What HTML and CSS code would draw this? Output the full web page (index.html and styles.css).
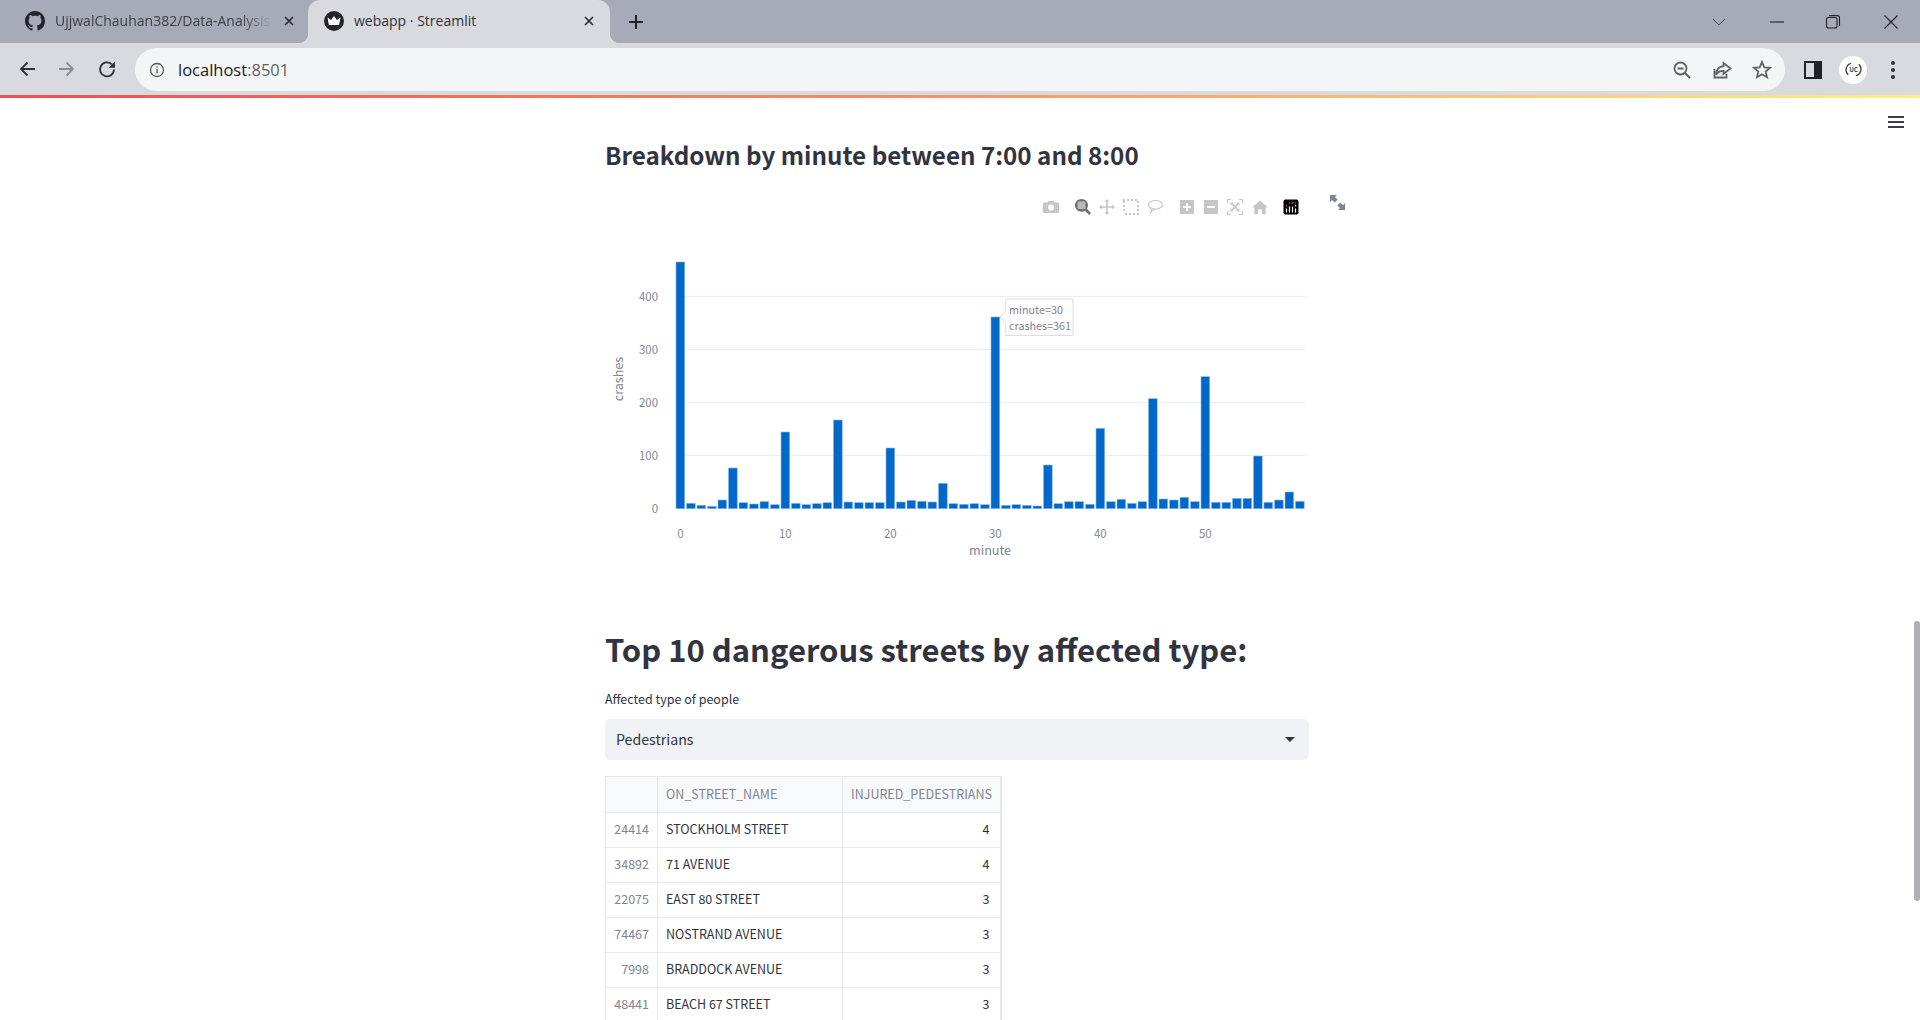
FILE: index.html
```html
<!DOCTYPE html>
<html lang="en">
<head>
<meta charset="utf-8">
<title>webapp · Streamlit</title>
<link rel="stylesheet" href="styles.css">
</head>
<body>
<header class="chrome">
  <div class="tabstrip">
    <div class="tab">
      <svg class="favicon" viewBox="0 0 16 16"><path class="ink" d="M8 0C3.58 0 0 3.58 0 8c0 3.54 2.29 6.53 5.47 7.59.4.07.55-.17.55-.38 0-.19-.01-.82-.01-1.49-2.01.37-2.53-.49-2.69-.94-.09-.23-.48-.94-.82-1.13-.28-.15-.68-.52-.01-.53.63-.01 1.08.58 1.23.82.72 1.21 1.87.87 2.33.66.07-.52.28-.87.51-1.07-1.78-.2-3.64-.89-3.64-3.95 0-.87.31-1.59.82-2.15-.08-.2-.36-1.02.08-2.12 0 0 .67-.21 2.2.82.64-.18 1.32-.27 2-.27.68 0 1.36.09 2 .27 1.53-1.04 2.2-.82 2.2-.82.44 1.1.16 1.92.08 2.12.51.56.82 1.27.82 2.15 0 3.07-1.87 3.75-3.65 3.95.29.25.54.73.54 1.48 0 1.07-.01 1.93-.01 2.2 0 .21.15.46.55.38A8.013 8.013 0 0016 8c0-4.42-3.58-8-8-8z"/></svg>
      <span class="tab-title faded">UjjwalChauhan382/Data-Analysis</span>
      <svg class="tab-close" viewBox="0 0 12 12"><path d="M2 2l8 8M10 2l-8 8"/></svg>
    </div>
    <div class="tab active">
      <svg class="favicon" viewBox="0 0 20 20"><circle class="ink" cx="10" cy="10" r="10"/><path class="crown" d="M3.500 6.500l3.600 2.600L10 5l2.900 4.100 3.600-2.600-1.400 7.500H4.900z"/></svg>
      <span class="tab-title">webapp · Streamlit</span>
      <svg class="tab-close" viewBox="0 0 12 12"><path d="M2 2l8 8M10 2l-8 8"/></svg>
    </div>
    <svg class="new-tab" viewBox="0 0 16 16"><path d="M8 1v14M1 8h14"/></svg>
    <div class="window-controls">
      <svg class="win chevron" viewBox="0 0 14 8"><path d="M1 1l6 6 6-6"/></svg>
      <svg class="win" viewBox="0 0 14 14"><path d="M0 7h14"/></svg>
      <svg class="win restore" viewBox="0 0 14 14"><rect x=".5" y="2.500" width="10.500" height="10.500" rx="2"/><path d="M3 .6h8.500a2 2 0 0 1 2 2V11"/></svg>
      <svg class="win" viewBox="0 0 14 14"><path d="M.5.5l13 13M13.500.5l-13 13"/></svg>
    </div>
  </div>
  <div class="toolbar">
    <svg class="nav" viewBox="0 0 20 20"><path d="M18 10H4M10.500 3.500L4 10l6.500 6.500"/></svg>
    <svg class="nav off" viewBox="0 0 20 20"><path d="M2 10h14M9.500 3.500L16 10l-6.500 6.500"/></svg>
    <svg class="nav" viewBox="0 0 20 20"><path d="M17 10.500a7 7 0 1 1-2.200-5.200"/><path class="solid" d="M18 2.500v6.300h-6.300z"/></svg>
    <div class="omnibox">
      <svg class="info" viewBox="0 0 16 16"><circle cx="8" cy="8" r="6.500"/><path d="M8 7v4.500M8 4.300v1.500"/></svg>
      <span class="url">localhost<span class="port">:8501</span></span>
      <div class="omni-actions">
        <svg class="omni" viewBox="0 0 20 20"><circle cx="8.500" cy="8.500" r="6"/><path d="M5.500 8.500h6M13 13l5 5"/></svg>
        <svg class="omni" viewBox="0 0 20 20"><path d="M2.500 9v8.500h12V14"/><path d="M11.500 3l7 5.500-7 5.500v-3.200c-3.500 0-6 1-7.500 4 .4-5 3-8.200 7.500-8.600z"/></svg>
        <svg class="omni" viewBox="0 0 20 20"><path d="M10 2l2.300 5.300 5.700.5-4.300 3.800 1.300 5.600-5-3-5 3 1.300-5.600L2 7.800l5.700-.5z"/></svg>
      </div>
    </div>
    <div class="side-panel"><span></span></div>
    <div class="avatar"><svg viewBox="0 0 20 20"><path d="M7.500 3.500a7 7 0 0 0-3 12M12.500 16.500a7 7 0 0 0 3-12"/><text x="10" y="12.500">UC</text></svg></div>
    <div class="kebab"><i></i><i></i><i></i></div>
  </div>
  <div class="progress"></div>
</header>

<main class="app">
  <button class="hamburger" aria-label="menu"><i></i><i></i><i></i></button>
  <div class="scrollthumb"></div>
  <section class="block">
    <h3>Breakdown by minute between 7:00 and 8:00</h3>
    <div class="chart">
      <div class="modebar">
        <svg class="mb mb-first" viewBox="0 0 16 16"><path fill-rule="evenodd" d="M1 3.500h3.500L5.500 2h5l1 1.500H15a1 1 0 0 1 1 1V13a1 1 0 0 1-1 1H1a1 1 0 0 1-1-1V4.500a1 1 0 0 1 1-1zM8 5.500a3 3 0 1 0 0 6 3 3 0 0 0 0-6z"/></svg>
        <svg class="mb mb-gap16 dark" viewBox="0 0 16 16"><path fill-rule="evenodd" d="M6.500 0C10 0 13 2.800 13 6.300c0 1.300-.4 2.500-1.100 3.500L16 14l-1.800 2-4.300-4.200c-1 .6-2.200 1-3.400 1C3 12.800 0 9.900 0 6.300 0 2.800 3 0 6.500 0zM3.800 2.800c-.6 0-1 .4-1 1v5.200c0 .6.400 1 1 1h5.400c.6 0 1-.4 1-1V3.800c0-.6-.4-1-1-1z"/><rect class="lens" x="2.800" y="2.800" width="7.400" height="7.200" rx="1"/></svg>
        <svg class="mb" viewBox="0 0 16 16"><path d="M8 0l2.500 2.800H8.800v4.400h4.400V5.500L16 8l-2.800 2.500V8.800H8.800v4.400h1.700L8 16l-2.500-2.800h1.700V8.800H2.800v1.700L0 8l2.800-2.500v1.700h4.400V2.800H5.500z"/></svg>
        <svg class="mb" viewBox="0 0 16 16"><path d="M0 0h2v2H0zM4 0h2v2H4zM8 0h2v2H8zM12 0h2v2h-2zM14 2h2v2h-2zM14 6h2v2h-2zM14 10h2v2h-2zM14 14h2v2h-2zM10 14h2v2h-2zM6 14h2v2H6zM2 14h2v2H2zM0 10h2v2H0zM0 6h2v2H0zM0 2h2v2H0z"/></svg>
        <svg class="mb mb-line" viewBox="0 0 16 16"><path d="M8.500 1.500c3.800 0 6.800 1.700 6.800 4.200s-3 4.400-6.800 4.400c-3.800 0-7-1.900-7-4.400s3.200-4.200 7-4.200zM4 9c-.6 1.700.2 2.700 1.500 2.700S7 11 6.300 10.100M4.800 11.500c-.2 1.300-.8 2.200-1.800 3"/></svg>
        <svg class="mb mb-gap17 sq" viewBox="0 0 14 14"><path fill-rule="evenodd" d="M0 0h14v14H0zM6 3v3H3v2h3v3h2V8h3V6H8V3z"/></svg>
        <svg class="mb sq mb-gap10" viewBox="0 0 14 14"><path fill-rule="evenodd" d="M0 0h14v14H0zM3 6v2h8V6z"/></svg>
        <svg class="mb mb-gap9" viewBox="0 0 16 16"><path d="M0 0h4v1H1v3H0zM12 0h4v4h-1V1h-3zM0 12h1v3h3v1H0zM15 12h1v4h-4v-1h3z"/><path d="M3.500 3.500h3L5.600 4.400l2.400 2.400 2.400-2.400-.9-.9h3v3l-.9-.9L9.200 8l2.400 2.400.9-.9v3h-3l.9-.9L8 9.200l-2.400 2.400.9.9h-3v-3l.9.9L6.800 8 4.400 5.600l-.9.9z"/></svg>
        <svg class="mb mb-gap9" viewBox="0 0 16 16"><path d="M8 1.500l8 7h-2.300V15H10v-4.500H6V15H2.300V8.500H0z"/></svg>
        <svg class="logo" viewBox="0 0 16 16"><rect width="16" height="16" rx="2.500"/><path d="M3.500 9.500v4M6.500 7.500v6M9.500 7.500v6M12.500 9.500v4"/><circle class="d1" cx="3.500" cy="6.800" r=".8"/><circle class="d1" cx="6.500" cy="4" r=".8"/><circle class="d3" cx="9.500" cy="4" r=".8"/><circle class="d1" cx="12.500" cy="4" r=".8"/><circle class="d2" cx="12.500" cy="6.800" r=".8"/></svg>
      </div>
      <svg class="fullscreen" viewBox="0 0 15 15"><path d="M0 0h7L5 2l2.600 2.600-3 3L2 5 0 7zM15 15H8l2-2-2.600-2.600 3-3L13 10l2-2z"/></svg>
      <svg class="plot" viewBox="605 180 704 400">
        <g class="grid">
          <path d="M684 296.300H1305M684 349.300H1305M684 402.300H1305M684 455.300H1305"/>
        </g>
        <g class="bars">
          <rect x="676" y="262" height="246.700"/>
          <rect x="686.500" y="503.300" height="5.400"/>
          <rect x="697" y="505.300" height="3.400"/>
          <rect x="707.500" y="506.300" height="2.400"/>
          <rect x="718" y="500" height="8.700"/>
          <rect x="728.500" y="468" height="40.700"/>
          <rect x="739" y="502.700" height="6"/>
          <rect x="749.500" y="504" height="4.700"/>
          <rect x="760" y="501.700" height="7"/>
          <rect x="770.500" y="504.700" height="4"/>
          <rect x="781" y="432" height="76.700"/>
          <rect x="791.500" y="503.300" height="5.400"/>
          <rect x="802" y="504.700" height="4"/>
          <rect x="812.500" y="503.700" height="5"/>
          <rect x="823" y="502.700" height="6"/>
          <rect x="833.500" y="420" height="88.700"/>
          <rect x="844" y="502" height="6.700"/>
          <rect x="854.500" y="502.700" height="6"/>
          <rect x="865" y="502.700" height="6"/>
          <rect x="875.500" y="502.700" height="6"/>
          <rect x="886" y="448" height="60.700"/>
          <rect x="896.500" y="502" height="6.700"/>
          <rect x="907" y="500.300" height="8.400"/>
          <rect x="917.500" y="501.300" height="7.400"/>
          <rect x="928" y="502" height="6.700"/>
          <rect x="938.500" y="483.300" height="25.400"/>
          <rect x="949" y="503.700" height="5"/>
          <rect x="959.500" y="504.300" height="4.400"/>
          <rect x="970" y="503.700" height="5"/>
          <rect x="980.500" y="504.700" height="4"/>
          <rect x="991" y="317" height="191.700"/>
          <rect x="1001.500" y="505.300" height="3.400"/>
          <rect x="1012" y="504.700" height="4"/>
          <rect x="1022.500" y="505.300" height="3.400"/>
          <rect x="1033" y="506" height="2.700"/>
          <rect x="1043.500" y="465" height="43.700"/>
          <rect x="1054" y="503.700" height="5"/>
          <rect x="1064.500" y="501.700" height="7"/>
          <rect x="1075" y="501.700" height="7"/>
          <rect x="1085.500" y="504.300" height="4.400"/>
          <rect x="1096" y="428.300" height="80.400"/>
          <rect x="1106.500" y="501.700" height="7"/>
          <rect x="1117" y="499.300" height="9.400"/>
          <rect x="1127.500" y="503.300" height="5.400"/>
          <rect x="1138" y="501.700" height="7"/>
          <rect x="1148.500" y="398.700" height="110"/>
          <rect x="1159" y="499" height="9.700"/>
          <rect x="1169.500" y="500" height="8.700"/>
          <rect x="1180" y="497.300" height="11.400"/>
          <rect x="1190.500" y="501.700" height="7"/>
          <rect x="1201" y="376.700" height="132"/>
          <rect x="1211.500" y="502.300" height="6.400"/>
          <rect x="1222" y="502.300" height="6.400"/>
          <rect x="1232.500" y="498.300" height="10.400"/>
          <rect x="1243" y="498.300" height="10.400"/>
          <rect x="1253.500" y="456" height="52.700"/>
          <rect x="1264" y="502.300" height="6.400"/>
          <rect x="1274.500" y="500" height="8.700"/>
          <rect x="1285" y="492" height="16.700"/>
          <rect x="1295.500" y="501.300" height="7.400"/>
        </g>
        <g class="ytick">
          <text x="658" y="513">0</text>
          <text x="658" y="460">100</text>
          <text x="658" y="407">200</text>
          <text x="658" y="354">300</text>
          <text x="658" y="301">400</text>
        </g>
        <g class="xtick">
          <text x="680.300" y="538">0</text>
          <text x="785.300" y="538">10</text>
          <text x="890.300" y="538">20</text>
          <text x="995.300" y="538">30</text>
          <text x="1100.300" y="538">40</text>
          <text x="1205.300" y="538">50</text>
        </g>
        <text class="axis" x="990" y="555">minute</text>
        <text class="axis" transform="translate(623 379) rotate(-90)">crashes</text>
        <path class="tip" d="M1000 317l5.800-5.800V299H1073V335.500H1005.800V322.800z"/>
        <text class="tip-text" x="1009" y="314">minute=30</text>
        <text class="tip-text" x="1009" y="330">crashes=361</text>
      </svg>
    </div>
    <h2>Top 10 dangerous streets by affected type:</h2>
    <label class="field-label">Affected type of people</label>
    <div class="select"><span>Pedestrians</span><svg viewBox="0 0 10 5"><path d="M0 0h10L5 5z"/></svg></div>
    <table class="data">
      <colgroup><col class="c-idx"><col class="c-name"><col class="c-val"></colgroup>
      <thead><tr><th></th><th>ON_STREET_NAME</th><th>INJURED_PEDESTRIANS</th></tr></thead>
      <tbody>
        <tr><th>24414</th><td>STOCKHOLM STREET</td><td class="num">4</td></tr>
        <tr><th>34892</th><td>71 AVENUE</td><td class="num">4</td></tr>
        <tr><th>22075</th><td>EAST 80 STREET</td><td class="num">3</td></tr>
        <tr><th>74467</th><td>NOSTRAND AVENUE</td><td class="num">3</td></tr>
        <tr><th>7998</th><td>BRADDOCK AVENUE</td><td class="num">3</td></tr>
        <tr><th>48441</th><td>BEACH 67 STREET</td><td class="num">3</td></tr>
      </tbody>
    </table>
  </section>
</main>
</body>
</html>
```
FILE: styles.css
```css
* { box-sizing: border-box; }
html, body { margin: 0; height: 1020px; overflow: hidden; background: #fff; }
body { font-family: "Noto Sans CJK SC", "Noto Sans", sans-serif; color: #31333f; }

/* browser chrome */
.chrome { font-family: "Open Sans", "Noto Sans", sans-serif; }
.tabstrip { height: 43px; background: #a7abb8; display: flex; align-items: stretch; padding-left: 8px; }
.tab { width: 300px; display: flex; align-items: center; padding: 0 13px 2px 17px; color: #3c4043; position: relative; }
.tab.active { width: 302px; padding: 0 15px 2px 16px; background: #d9dae0; border-radius: 12px 12px 0 0; color: #2f3136; }
.tab.active::before, .tab.active::after { content: ""; position: absolute; bottom: 0; width: 10px; height: 10px; }
.tab.active::before { left: -10px; background: radial-gradient(circle at 0 0, transparent 10px, #d9dae0 10.5px); }
.tab.active::after { right: -10px; background: radial-gradient(circle at 100% 0, transparent 10px, #d9dae0 10.5px); }
.favicon { width: 20px; height: 20px; flex: none; }
.ink { fill: #24252b; }
.crown { fill: #fff; }
.tab-title { flex: 1; margin-left: 10px; font-size: 14px; white-space: nowrap; overflow: hidden; }
.faded { -webkit-mask-image: linear-gradient(90deg, #000 85%, transparent 100%); mask-image: linear-gradient(90deg, #000 85%, transparent 100%); margin-right: 10px; }
.tab-close { width: 12px; height: 12px; flex: none; fill: none; stroke: #26272b; stroke-width: 1.600; }
.new-tab { width: 16px; height: 16px; align-self: center; margin-left: 18px; fill: none; stroke: #202124; stroke-width: 2; }
.window-controls { margin-left: auto; padding-right: 22px; display: flex; align-items: center; gap: 44px; }
.win { width: 14px; height: 14px; fill: none; stroke: #202124; stroke-width: 1.100; overflow: visible; }
.restore { margin-left: -2px; }
.chevron { height: 8px; stroke-width: 1; stroke: #44464e; }

.toolbar { height: 52px; background: #d9dae0; display: flex; align-items: center; padding: 5px 0 4px 17px; }
.nav { width: 20px; height: 20px; flex: none; margin: 0 20px 2px 0; fill: none; stroke: #2f3136; stroke-width: 1.800; }
.nav.off { stroke: #8b8d94; }
.nav .solid { fill: #2f3136; stroke: none; }
.omnibox { width: 1650px; height: 43px; margin-left: -2px; background: #f4f5f7; border-radius: 22px; display: flex; align-items: center; padding: 0 13px 0 14px; flex: none; }
.info { width: 16px; height: 16px; fill: none; stroke: #55575c; stroke-width: 1.300; flex: none; }
.url { margin-left: 13px; font-size: 16.500px; color: #202124; }
.port { color: #5f6368; }
.omni-actions { margin-left: auto; display: flex; gap: 20px; }
.omni { width: 20px; height: 20px; fill: none; stroke: #5f6368; stroke-width: 1.800; }
.side-panel { width: 18px; height: 18px; margin-left: 19px; flex: none; border: 2.500px solid #202124; display: flex; justify-content: flex-end; }
.side-panel span { width: 6px; background: #202124; }
.avatar { width: 28px; height: 28px; margin-left: 17px; flex: none; border-radius: 50%; background: #fff; display: flex; align-items: center; justify-content: center; }
.avatar svg { width: 19px; height: 19px; fill: none; stroke: #44464e; stroke-width: 1.500; }
.avatar text { font-family: "Open Sans", sans-serif; font-size: 6.500px; font-weight: 700; text-anchor: middle; fill: #44464e; stroke: none; }
.kebab { margin-left: 24px; display: flex; flex-direction: column; gap: 3px; }
.kebab i { display: block; width: 4px; height: 4px; border-radius: 50%; background: #2f3136; }
.progress { height: 3px; background: linear-gradient(90deg, #f04e4e, #f78a68 45%, #fff07e); }

/* app */
.app { position: relative; height: 922px; padding-right: 6px; overflow: hidden; }
.block { width: 704px; margin: 0 auto; padding-top: 39px; }
.hamburger { position: absolute; top: 18px; right: 16px; width: 16px; padding: 0; border: 0; background: none; display: flex; flex-direction: column; gap: 3px; }
.hamburger i { display: block; height: 2px; background: #3b3d49; }
.scrollthumb { position: absolute; top: 523px; right: 0; width: 6px; height: 280px; background: #afafb5; border-radius: 3px; }
h3 { margin: 0; font-size: 24.200px; line-height: 36px; font-weight: 600; color: #31333f; white-space: nowrap; }
h2 { margin: 46px 0 0; font-size: 31px; line-height: 46px; font-weight: 600; color: #31333f; white-space: nowrap; }

.chart { position: relative; height: 400px; margin-top: 7px; }
.plot { display: block; width: 704px; height: 400px; }
.modebar { position: absolute; top: 19px; left: 438px; display: flex; align-items: center; }
.mb { width: 16px; height: 16px; margin-left: 8px; flex: none; fill: #c6c6c6; }
.mb-first { margin-left: 0; }
.mb-gap16 { margin-left: 16px; }
.mb-gap17 { margin-left: 17px; }
.mb-gap10 { margin-left: 10px; }
.mb-gap9 { margin-left: 9px; }
.mb.dark { fill: #6f6f6f; }
.mb.dark .lens { fill: #b9b9bc; }
.mb.sq { width: 14px; height: 14px; }
.mb-line { fill: none; stroke: #c6c6c6; stroke-width: 1.200; }
.logo { width: 16px; height: 16px; margin-left: 15px; flex: none; fill: #000; stroke: #fff; }
.logo path { stroke-width: 1.200; }
.logo circle { stroke: none; }
.logo .d1 { fill: #e0457b; }
.logo .d2 { fill: #fff; }
.logo .d3 { fill: #68c3e0; }
.fullscreen { position: absolute; top: 15px; left: 725px; width: 15px; height: 15px; fill: #808495; }
.grid path { stroke: #e6ebf3; stroke-width: 1; fill: none; }
.bars rect { width: 8.700px; fill: #0068c9; stroke: #8ab8e6; stroke-width: .6; }
.plot text { font-size: 11.400px; fill: #808495; }
.ytick text { text-anchor: end; }
.xtick text { text-anchor: middle; }
.plot .axis { font-size: 12.600px; text-anchor: middle; }
.plot .tip-text { font-size: 10.800px; }
.tip { fill: #fff; stroke: #dcdde2; stroke-width: 1; }

.field-label { display: block; margin-top: 17px; font-size: 12.500px; line-height: 20px; color: #31333f; }
.select { height: 41px; margin-top: 10px; background: #f0f2f6; border-radius: 5px; display: flex; align-items: center; justify-content: space-between; padding: 0 14px 2px 11px; font-size: 14.200px; }
.select svg { width: 10px; height: 5px; fill: #31333f; position: relative; top: 1px; }

.data { margin-top: 16px; width: 395px; table-layout: fixed; border-collapse: collapse; font-size: 12.500px; border-right: 2px solid #e6e8ee; }
.c-idx { width: 52px; }
.c-name { width: 185px; }
.c-val { width: 158px; }
.data th, .data td { border: 1px solid #e6e8ee; padding: 0 8px 3px; height: 35px; font-weight: 400; text-align: left; white-space: nowrap; overflow: hidden; }
.data thead th { height: 36px; background: #f8f9fb; color: #808495; }
.data tbody th { text-align: right; color: #808495; }
.data td { color: #31333f; }
.data td.num { text-align: right; padding-right: 10px; }
```
